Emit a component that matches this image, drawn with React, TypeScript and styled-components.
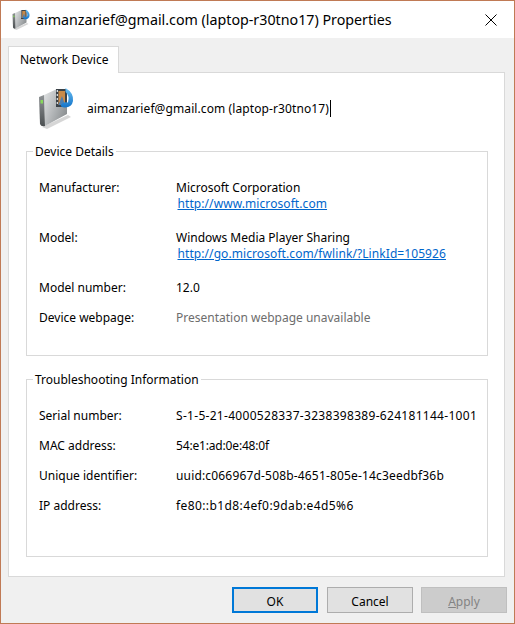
import React from 'react';
import styled, { createGlobalStyle } from 'styled-components';

const GlobalStyle = createGlobalStyle`
  html, body {
    margin: 0;
    padding: 0;
    background: #f0f0f0;
  }
  body {
    font-family: "Noto Sans", "Open Sans", "Liberation Sans", sans-serif;
    font-size: 12px;
    color: #000;
  }
`;

const Dialog = styled.div`
  box-sizing: border-box;
  width: 515px;
  height: 624px;
  display: flex;
  flex-direction: column;
  background: #f0f0f0;
  border: 1px solid #c07a55;
`;

const TitleBar = styled.div`
  height: 37px;
  display: flex;
  align-items: center;
  background: #fff;
  padding-left: 11px;
`;

const TitleText = styled.div`
  margin-left: 6px;
  padding-bottom: 1px;
  font-size: 14.26px;
  flex: 1;
`;

const CloseButton = styled.div`
  width: 46px;
  height: 37px;
  display: flex;
  align-items: center;
  justify-content: center;
`;

const TabStrip = styled.div`
  display: flex;
  margin: 8px 9px 0 7px;
`;

const Tab = styled.div`
  box-sizing: border-box;
  width: 111px;
  height: 27px;
  margin-bottom: -1px;
  padding-left: 11px;
  line-height: 25px;
  background: #fff;
  border: 1px solid #d9d9d9;
  border-bottom: none;
  z-index: 1;
`;

const Panel = styled.div`
  box-sizing: border-box;
  height: 505px;
  margin: 0 9px 0 7px;
  padding: 0 16px 0 17px;
  background: #fff;
  border: 1px solid #d9d9d9;
`;

const DeviceHeader = styled.div`
  height: 70px;
  display: flex;
  align-items: center;
  padding-left: 12px;
`;

const DeviceName = styled.div`
  display: flex;
  align-items: center;
  margin-left: 13px;
  letter-spacing: 0.1px;
`;

const Caret = styled.span`
  width: 1px;
  height: 17px;
  margin-left: 1px;
  background: #000;
`;

const Group = styled.fieldset<{ $height: number }>`
  box-sizing: border-box;
  height: ${(p) => p.$height}px;
  margin: 0 0 15px;
  padding: 0 0 0 12px;
  border: 1px solid #d9d9d9;
`;

const GroupTitle = styled.legend`
  height: 16px;
  margin-left: -6px;
  padding: 0 2px;
  line-height: 18px;
`;

const Rows = styled.div`
  padding-top: 21px;
`;

const Row = styled.div<{ $tall?: boolean }>`
  display: grid;
  grid-template-columns: 137px 1fr;
  height: ${(p) => (p.$tall ? 50 : 30)}px;
  line-height: 16px;
`;

const Value = styled.div<{ $tracking?: number; $muted?: boolean }>`
  white-space: nowrap;
  letter-spacing: ${(p) => p.$tracking ?? 0}px;
  color: ${(p) => (p.$muted ? '#6d6d6d' : '#000')};
`;

const DeviceLink = styled.a`
  display: block;
  margin-left: 1.5px;
  letter-spacing: 0.08px;
  color: #0066cc;
  text-decoration: underline;
`;

const Footer = styled.div`
  display: flex;
  justify-content: flex-end;
  padding: 10px 7px 0 0;
`;

const DialogButton = styled.button<{ $primary?: boolean }>`
  box-sizing: border-box;
  width: 86px;
  height: 26px;
  margin-left: 9px;
  padding: 2px 0 0;
  font: inherit;
  color: #000;
  background: #e1e1e1;
  border: ${(p) => (p.$primary ? '2px solid #0078d7' : '1px solid #adadad')};

  &:disabled {
    margin-left: 8px;
    color: #838383;
    background: #cccccc;
    border-color: #bfbfbf;
  }
`;

const DeviceIcon: React.FC<{ size: number }> = ({ size }) => (
  <svg width={size} height={(size * 42) / 36} viewBox="0 0 36 42">
    <defs>
      <linearGradient id="front" x1="0" y1="0" x2="1" y2="0.6">
        <stop offset="0" stopColor="#e4e6e7" />
        <stop offset="0.55" stopColor="#b4b7b9" />
        <stop offset="1" stopColor="#8d9193" />
      </linearGradient>
      <linearGradient id="spine" x1="0" y1="0" x2="0" y2="1">
        <stop offset="0" stopColor="#8e9294" />
        <stop offset="1" stopColor="#4c5052" />
      </linearGradient>
      <linearGradient id="note" x1="0" y1="0" x2="0" y2="1">
        <stop offset="0" stopColor="#6cc0f2" />
        <stop offset="1" stopColor="#1273c9" />
      </linearGradient>
    </defs>
    <path d="M4 40 L30 28 L33 30 L9 42 Z" fill="#d6d6d6" />
    <path d="M6 8 L19 2 L29 4 L29 27 L7 39 Z" fill="url(#front)" />
    <path d="M1 10 L6 8 L7 39 Q3 40 2 37 Z" fill="url(#spine)" />
    <rect x="2.5" y="13" width="2.5" height="3.5" fill="#86d85a" />
    <rect x="18" y="2" width="11" height="18" fill="#3b4248" />
    <rect x="20.5" y="4" width="6.5" height="14" fill="#c98b4a" />
    <path d="M20.5 18 L24 9 L27 18 Z" fill="#4d7fb0" />
    <path d="M18.7 3h1.2v2h-1.2zM18.7 7h1.2v2h-1.2zM18.7 11h1.2v2h-1.2zM18.7 15h1.2v2h-1.2z" fill="#e6ebef" />
    <path d="M27.5 1 Q36 6 35 14 Q34 20 27 20.5 Q22 20.5 23 17.5 Q25 14.5 30 15.5 Q32 9 27.5 5 Z" fill="url(#note)" />
  </svg>
);

const CloseIcon = () => (
  <svg width="12" height="12" viewBox="0 0 12 12">
    <path d="M0.5 0.5 L11.5 11.5 M11.5 0.5 L0.5 11.5" stroke="#000" strokeWidth="1" fill="none" />
  </svg>
);

const App: React.FC = () => {
  return (
    <>
      <GlobalStyle />
      <Dialog>
        <TitleBar>
          <DeviceIcon size={18} />
          <TitleText>aimanzarief@gmail.com (laptop-r30tno17) Properties</TitleText>
          <CloseButton>
            <CloseIcon />
          </CloseButton>
        </TitleBar>
        <TabStrip>
          <Tab>Network Device</Tab>
        </TabStrip>
        <Panel>
          <DeviceHeader>
            <DeviceIcon size={36} />
            <DeviceName>
              aimanzarief@gmail.com (laptop-r30tno17)
              <Caret />
            </DeviceName>
          </DeviceHeader>
          <Group $height={213}>
            <GroupTitle>Device Details</GroupTitle>
            <Rows>
              <Row $tall>
                <div>Manufacturer:</div>
                <Value>
                  Microsoft Corporation
                  <DeviceLink href="#">http://www.microsoft.com</DeviceLink>
                </Value>
              </Row>
              <Row $tall>
                <div>Model:</div>
                <Value>
                  Windows Media Player Sharing
                  <DeviceLink href="#">http://go.microsoft.com/fwlink/?LinkId=105926</DeviceLink>
                </Value>
              </Row>
              <Row>
                <div>Model number:</div>
                <Value>12.0</Value>
              </Row>
              <Row>
                <div>Device webpage:</div>
                <Value $muted>Presentation webpage unavailable</Value>
              </Row>
            </Rows>
          </Group>
          <Group $height={186}>
            <GroupTitle>Troubleshooting Information</GroupTitle>
            <Rows>
              <Row>
                <div>Serial number:</div>
                <Value $tracking={0.3}>S-1-5-21-4000528337-3238398389-624181144-1001</Value>
              </Row>
              <Row>
                <div>MAC address:</div>
                <Value $tracking={-0.17}>54:e1:ad:0e:48:0f</Value>
              </Row>
              <Row>
                <div>Unique identifier:</div>
                <Value $tracking={0.17}>uuid:c066967d-508b-4651-805e-14c3eedbf36b</Value>
              </Row>
              <Row>
                <div>IP address:</div>
                <Value $tracking={0.4}>fe80::b1d8:4ef0:9dab:e4d5%6</Value>
              </Row>
            </Rows>
          </Group>
        </Panel>
        <Footer>
          <DialogButton $primary>OK</DialogButton>
          <DialogButton>Cancel</DialogButton>
          <DialogButton disabled>
            <u>A</u>pply
          </DialogButton>
        </Footer>
      </Dialog>
    </>
  );
};

export default App;
